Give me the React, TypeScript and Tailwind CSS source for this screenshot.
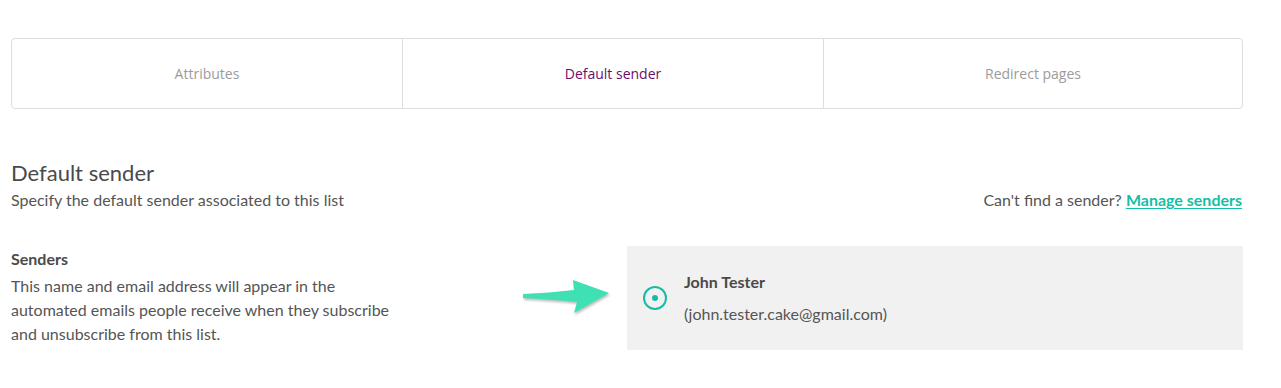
import { useState } from 'react';

const tabs = [
  { id: 'attributes', label: 'Attributes', width: 'w-[390px]' },
  { id: 'default-sender', label: 'Default sender', width: 'w-[421px]' },
  { id: 'redirect', label: 'Redirect pages', width: 'flex-1' },
];

function PointerArrow() {
  return (
    <svg width="92" height="44" viewBox="0 0 92 44" className="drop-shadow-[1px_2px_1px_rgba(0,0,0,0.25)]">
      <path
        d="M2 19 C20 18 36 17 53 15 L52 5 L88 18 L53 38 L56 27 C38 25 20 24 2 23 Z"
        fill="#3ee0b4"
      />
    </svg>
  );
}

export default function App() {
  const [activeTab, setActiveTab] = useState('default-sender');
  const [selected, setSelected] = useState(true);

  return (
    <div className="min-h-[388px] bg-white pl-[11px] pr-[38px] pt-[38px] font-['Lato','Open_Sans',sans-serif] text-[#555]">
      {/* Tabs */}
      <div className="flex h-[71px] rounded border border-[#dedede]">
        {tabs.map((tab, i) => (
          <button
            key={tab.id}
            onClick={() => setActiveTab(tab.id)}
            className={`${tab.width} flex items-center justify-center font-['Open_Sans',sans-serif] text-[14px] ${
              i > 0 ? 'border-l border-[#dedede]' : ''
            } ${activeTab === tab.id ? 'text-[#6b0f6b]' : 'text-[#9b9b9b]'}`}
          >
            {tab.label}
          </button>
        ))}
      </div>

      {/* Header */}
      <div className="mt-[51px]">
        <h2 className="text-[22px] leading-[26px] text-[#4a4a4a]">Default sender</h2>
        <div className="mt-[2px] flex items-center justify-between text-[16px] leading-[24px]">
          <p>Specify the default sender associated to this list</p>
          <p className="mr-[1px]">
            Can't find a sender?{' '}
            <a href="#" className="font-bold text-[#13bfa6] underline underline-offset-2">
              Manage senders
            </a>
          </p>
        </div>
      </div>

      {/* Senders */}
      <div className="mt-[34px] grid grid-cols-2">
        <div className="relative pt-[1px] text-[16px] leading-[24px]">
          <h3 className="font-bold text-[#4a4a4a]">Senders</h3>
          <p className="mt-[3px] w-[392px]">
            This name and email address will appear in the automated emails people receive when they subscribe
            and unsubscribe from this list.
          </p>
          <div className="absolute right-[14px] top-[29px]">
            <PointerArrow />
          </div>
        </div>
        <div
          className="flex h-[104px] cursor-pointer items-center bg-[#f1f1f1] pl-[16px]"
          onClick={() => setSelected(!selected)}
        >
          <span className="flex h-[24px] w-[24px] items-center justify-center rounded-full border-2 border-[#17bba6]">
            {selected && <span className="h-[6px] w-[6px] rounded-full bg-[#17bba6]" />}
          </span>
          <div className="ml-[17px] text-[16px]">
            <p className="font-bold leading-[24px] text-[#4a4a4a]">John Tester</p>
            <p className="mt-[8px] leading-[24px]">(john.tester.cake@gmail.com)</p>
          </div>
        </div>
      </div>
    </div>
  );
}
